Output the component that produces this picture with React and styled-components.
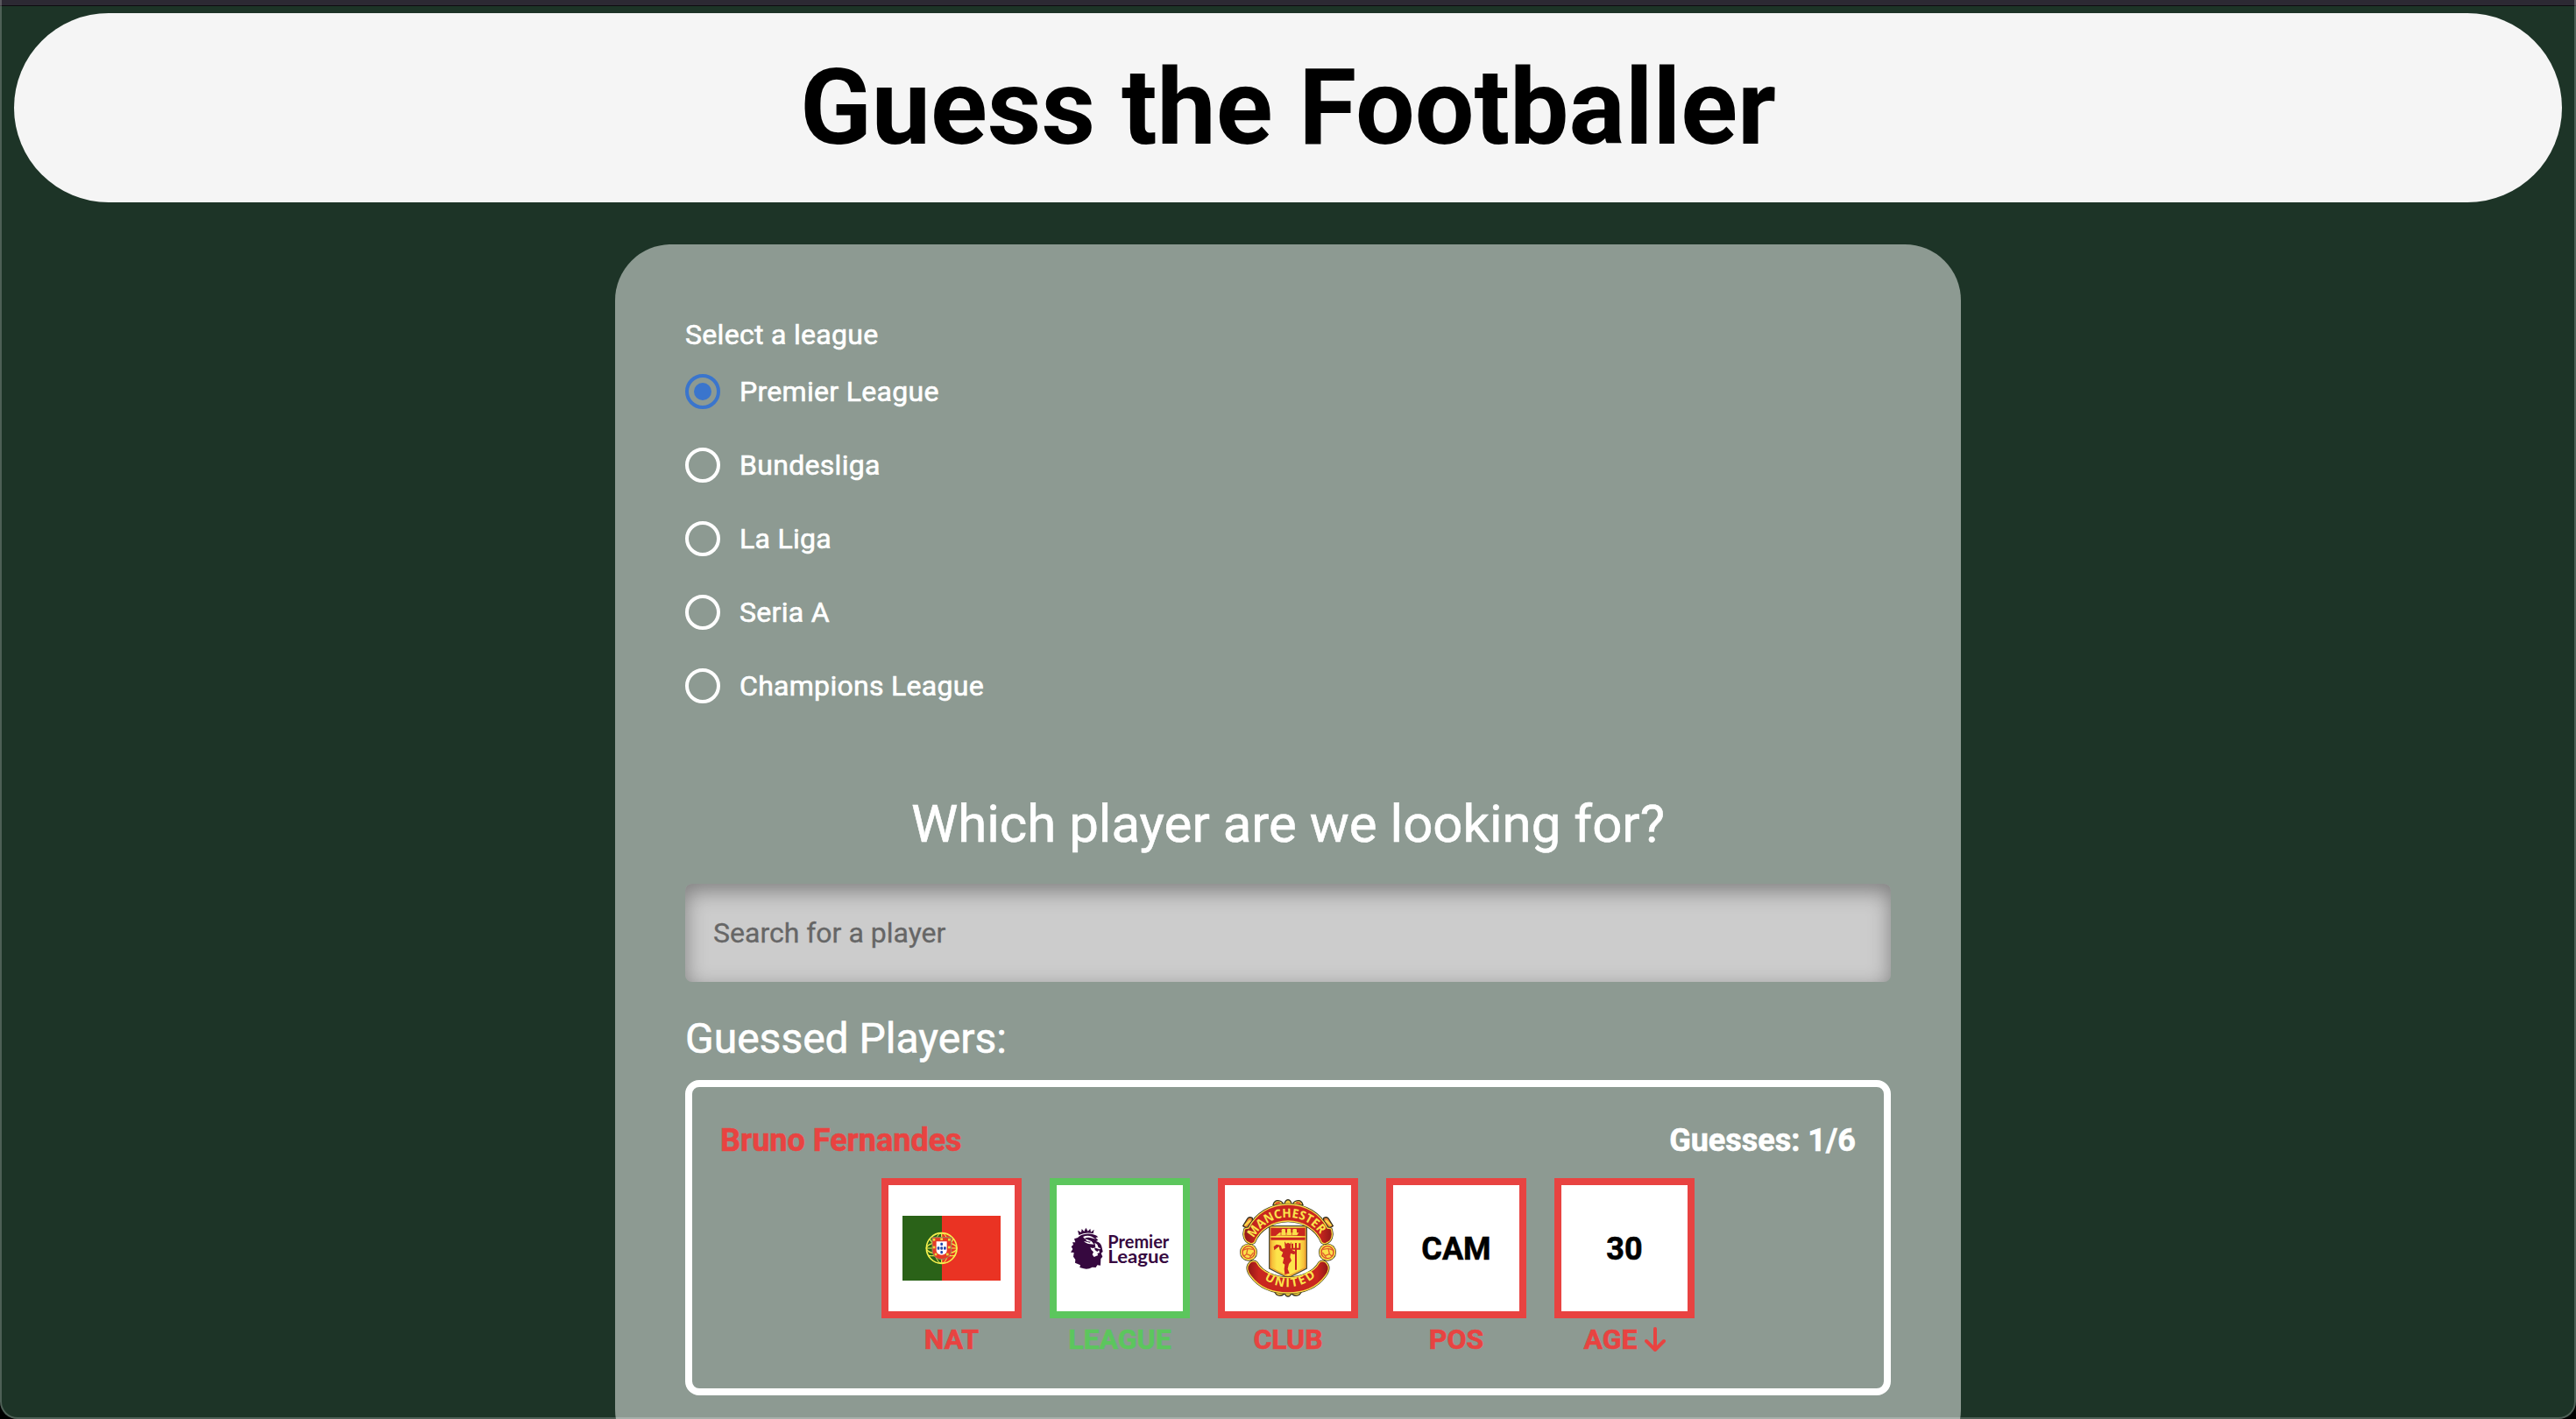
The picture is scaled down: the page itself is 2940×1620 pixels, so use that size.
import React, { useState } from "react";
import styled, { createGlobalStyle } from "styled-components";

const RED = "#e84341";
const GREEN = "#5cc65d";

const GlobalStyle = createGlobalStyle`
  *, *::before, *::after { box-sizing: border-box; }
  html, body { height: 100%; margin: 0; overflow: hidden; background: #1d3427; }
  body { font-family: Roboto, "Liberation Sans", sans-serif; color: #fff; }
`;

const Page = styled.div`
  height: 1620px;
  overflow: hidden;
  display: flex;
  flex-direction: column;
  align-items: center;
`;

const TopEdge = styled.div`
  align-self: stretch;
  flex: none;
  height: 7px;
  background: #2c2933;
  border-bottom: 1px solid #0d0c10;
`;

const WindowFrame = styled.div`
  position: fixed;
  inset: 0;
  border: 2px solid rgba(255, 255, 255, 0.22);
  border-top: 0;
  border-radius: 0 0 20px 20px;
  box-shadow: 0 0 0 20px #000;
  pointer-events: none;
`;

const Header = styled.header`
  flex: none;
  align-self: stretch;
  height: 216px;
  margin: 8px 16px 48px;
  border-radius: 108px;
  background: #f5f5f5;
  display: flex;
  align-items: center;
  justify-content: center;
`;

const Title = styled.h1`
  margin: 0;
  color: #000;
  font-size: 120px;
  font-weight: 700;
  line-height: 144px;
`;

const Card = styled.main`
  flex: none;
  width: 1536px;
  padding: 80px;
  border-radius: 64px;
  background: #8d9a92;
  -webkit-text-stroke: 0.6px currentColor;
`;

const Fieldset = styled.div`
  display: flex;
  flex-direction: column;
`;

const FieldLabel = styled.div`
  font-size: 32px;
  line-height: 46px;
  letter-spacing: 0.00938em;
`;

const Option = styled.label`
  display: flex;
  align-items: center;
  gap: 22px;
  height: 84px;
  font-size: 32px;
  line-height: 48px;
  letter-spacing: 0.00938em;
  cursor: pointer;
`;

const Radio = styled.input`
  appearance: none;
  flex: none;
  display: grid;
  place-content: center;
  width: 40px;
  height: 40px;
  margin: 0;
  border: 4px solid #fff;
  border-radius: 50%;

  &:checked { border-color: #3a75cd; }
  &:checked::before {
    content: "";
    width: 20px;
    height: 20px;
    border-radius: 50%;
    background: #3a75cd;
  }
`;

const Question = styled.h2`
  margin: 80px 0 32px;
  font-size: 60px;
  font-weight: 400;
  line-height: 72px;
  text-align: center;
`;

const Search = styled.input`
  display: block;
  width: 100%;
  height: 112px;
  padding: 0 32px;
  border: 0;
  border-radius: 8px;
  outline: 0;
  background: #ccc;
  box-shadow: inset 0 8px 24px rgba(0, 0, 0, 0.38);
  color: #222;
  font: 400 32px Roboto, "Liberation Sans", sans-serif;
  -webkit-text-stroke: 0.3px currentColor;

  &::placeholder { color: #666; opacity: 1; }
`;

const SectionTitle = styled.h3`
  margin: 33px 0 15px;
  font-size: 48px;
  font-weight: 400;
  line-height: 64px;
`;

const Guess = styled.section`
  padding: 32px;
  border: 8px solid #fff;
  border-radius: 16px;
`;

const GuessHead = styled.div`
  display: flex;
  justify-content: space-between;
  height: 72px;
  font-size: 36px;
  font-weight: 700;
  line-height: 59px;
`;

const PlayerName = styled.span`
  color: ${RED};
`;

const Tiles = styled.div`
  display: flex;
  justify-content: center;
  gap: 32px;
`;

const TileColumn = styled.div`
  width: 160px;
  display: flex;
  flex-direction: column;
  align-items: center;
  color: ${(p) => (p.$match ? GREEN : RED)};
`;

const TileBox = styled.div`
  width: 160px;
  height: 160px;
  border: 8px solid currentColor;
  background: #fff;
  display: flex;
  align-items: center;
  justify-content: center;
`;

const TileValue = styled.span`
  padding-top: 2px;
  color: #000;
  font-size: 36px;
  font-weight: 700;
`;

const TileLabel = styled.div`
  display: flex;
  align-items: center;
  gap: 8px;
  height: 48px;
  font-size: 32px;
  font-weight: 700;
  line-height: 48px;
`;

const Drawing = styled.svg`
  display: block;
  overflow: visible;
  -webkit-text-stroke: 0;
`;

const Flag = () => (
  <Drawing width="112" height="74" viewBox="150 204 336 222">
    <rect x="150" y="204" width="336" height="222" fill="#ea3323" />
    <rect x="150" y="204" width="135" height="222" fill="#2a6218" />
    <g fill="none" stroke="#f6f04d" strokeWidth="5">
      <circle cx="284" cy="315" r="52" />
      <ellipse cx="284" cy="315" rx="52" ry="21" strokeWidth="4" />
      <ellipse cx="284" cy="315" rx="24" ry="52" strokeWidth="3" />
      <path d="M284 262V368M233 315H336M243 283Q284 350 331 340M325 283Q284 350 238 340" strokeWidth="3.5" />
    </g>
    <path d="M252 278H317V321C317 341 302 353 284 353S252 341 252 321Z" fill="#e63a25" stroke="#9a8a60" strokeWidth="3" />
    <path d="M266 292H302V322C302 332 294 338 284 338S266 332 266 322Z" fill="#fff" />
    <g fill="#2547a8">
      {[[284, 301], [273, 315], [284, 315], [295, 315], [284, 329]].map(([x, y]) => (
        <rect key={`${x}-${y}`} x={x - 4} y={y - 5} width="8" height="10" rx="3" />
      ))}
    </g>
    <g fill="#e8d93f">
      {[[258, 286], [284, 284], [310, 286], [258, 312], [310, 312], [264, 336], [304, 336]].map(([x, y]) => (
        <rect key={`${x}-${y}`} x={x - 4} y={y - 4} width="8" height="8" />
      ))}
    </g>
  </Drawing>
);

const LeagueText = styled.text`
  font-family: Lato, Roboto, sans-serif;
  font-weight: 700;
  font-size: 64px;
  fill: #36083f;
`;

const LeagueLogo = () => (
  <Drawing width="112" height="48" viewBox="726 243 336 144">
    <g fill="#36083f">
      <path d="M754 270L750 254L762 261L764 249L772 258L778 245L785 257L793 248L795 260L806 251L803 265Q778 258 754 270Z" />
      <path d="M750 279Q761 267 779 266Q806 264 820 277L811 279L820 287L813 291Q829 296 832 309L836 327L830 332L835 344L829 351L828 374L817 373L812 381L800 380Q785 389 771 385L757 381L759 373L741 365L742 354L735 344L737 330L726 329L733 318L728 310L735 303L732 295L742 295L738 283Z" />
    </g>
    <g fill="#fff">
      <path d="M768 276Q783 269 798 275L812 284L796 280Q784 276 772 283L782 285L797 291L806 302L786 300Q776 297 771 291L785 294Z" />
      <path d="M808 296L817 302L821 313L829 316L822 320L825 330L817 334L820 339L806 345L800 337L804 328L797 321L793 313L803 315L811 311Z" />
    </g>
    <path d="M807 313L825 319L817 327L809 321ZM777 290L795 293L790 296Z" fill="#36083f" />
    <LeagueText x="853" y="315" textLength="210" lengthAdjust="spacingAndGlyphs">Premier</LeagueText>
    <LeagueText x="853" y="367" textLength="210" lengthAdjust="spacingAndGlyphs">League</LeagueText>
  </Drawing>
);

const CrestText = styled.text`
  font-family: "Open Sans", Lato, sans-serif;
  font-weight: 700;
  font-size: 42px;
  fill: #fbe54b;
`;

const Ball = ({ x, flip }) => (
  <g transform={`translate(${x} 329) scale(${flip ? -1 : 1} 1)`}>
    <circle r="30" fill="#3b3320" />
    <circle r="28" fill="#fbe04a" />
    <circle r="21" fill="#fbe04a" stroke="#d9452a" strokeWidth="4" />
    <path d="M-18 -8L-3 -13L15 -10M-3 -13L-7 6L-15 13M-7 6L8 12L17 1M8 12L4 20" fill="none" stroke="#e0622c" strokeWidth="4" />
  </g>
);

const TOP_RIBBON =
  "M151 252C150 248 158 248 165 246C191 196 239 165 300 165S409 196 435 246C442 248 450 248 449 252C455 271 449 291 432 297C427 300 420 299 415 295C398 250 349 222 300 222S202 250 185 295C180 299 173 300 168 297C151 291 145 271 151 252Z";
const BOTTOM_RIBBON =
  "M167 368C173 358 186 357 193 364C211 397 256 416 300 416S389 397 407 364C414 357 427 358 433 368C444 381 437 399 427 411C399 449 352 468 300 468S201 449 173 411C163 399 156 381 167 368Z";

const ClubCrest = () => (
  <Drawing width="112" height="112" viewBox="132 147 336 336">
    <defs>
      <path id="crest-top" d="M183 281A132 132 0 0 1 418 281" />
      <path id="crest-bottom" d="M198 407Q300 489 402 407" />
      <linearGradient id="crest-red" x1="0" x2="1">
        <stop offset="0" stopColor="#8f1717" />
        <stop offset="0.14" stopColor="#c9261f" />
        <stop offset="0.86" stopColor="#c9261f" />
        <stop offset="1" stopColor="#8f1717" />
      </linearGradient>
      <linearGradient id="crest-gold" x1="0" x2="1">
        <stop offset="0" stopColor="#f1a92f" />
        <stop offset="0.2" stopColor="#fde44b" />
        <stop offset="0.8" stopColor="#fde44b" />
        <stop offset="1" stopColor="#f1a92f" />
      </linearGradient>
    </defs>

    <g fill="#f4cf3e" stroke="#38311d" strokeWidth="4">
      <path d="M249 167Q253 151 266 152Q280 153 284 165L272 170Z" />
      <path d="M316 165Q320 153 334 152Q347 151 351 167L328 170Z" />
      <path d="M287 166Q290 150 300 149Q310 150 313 166Z" />
      <path d="M253 461Q259 480 275 477Q285 476 287 468ZM347 461Q341 480 325 477Q315 476 313 468ZM287 467Q292 480 300 480Q308 480 313 467Z" />
    </g>
    <g fill="#ef8a3a" stroke="#38311d" strokeWidth="4">
      <path d="M146 239L162 213Q169 206 178 212L178 222L161 244Q151 245 146 239Z" />
      <path d="M454 239L438 213Q431 206 422 212L422 222L439 244Q449 245 454 239Z" />
    </g>
    <path d="M152 237L171 220M448 237L429 220" stroke="#fbe04a" strokeWidth="6" />
    <path d="M257 162L272 159M343 162L328 159" stroke="#d9452a" strokeWidth="6" />

    <Ball x={165} />
    <Ball x={435} flip />

    <path d="M236 239H364V384L300 417L236 384Z" fill="url(#crest-gold)" stroke="#4b4a3c" strokeWidth="4" />
    <path d="M241 245H359V273H241ZM241 278H359V287H241Z" fill="#c9261f" />
    <path d="M241 287V382L300 412L359 382V287" fill="none" stroke="#eda02f" strokeWidth="4" />
    <g fill="#fbe04a">
      <path d="M258 272L271 262H337L331 271Z" />
      <rect x="278" y="249" width="13" height="20" rx="4" />
      <rect x="297" y="248" width="13" height="21" rx="4" />
      <rect x="316" y="249" width="14" height="20" rx="4" />
    </g>
    <path d="M276 271V263M294 270V250M313 270V250" stroke="#c9261f" strokeWidth="2" />
    <path
      d="M288 292L294 300L300 296L307 300L311 293L309 313L315 322L326 327L322 337L309 333L307 346L312 358L303 369L299 386L305 401L289 405L287 386L289 371L282 366L286 348L277 343L283 329L272 322L269 309L253 322L251 310L261 302L276 306L279 317L290 315Z"
      fill="#c9261f"
    />
    <path d="M315 299V317H340V298M327 297V389" fill="none" stroke="#c9261f" strokeWidth="6" />

    {[TOP_RIBBON, BOTTOM_RIBBON].map((d) => (
      <g key={d}>
        <path d={d} fill="none" stroke="#38311d" strokeWidth="8" />
        <path d={d} fill="url(#crest-red)" stroke="#f8dc48" strokeWidth="4" />
      </g>
    ))}
    <CrestText>
      <textPath href="#crest-top" textLength="274" lengthAdjust="spacingAndGlyphs">MANCHESTER</textPath>
    </CrestText>
    <CrestText>
      <textPath href="#crest-bottom" startOffset="25" textLength="191" lengthAdjust="spacing">UNITED</textPath>
    </CrestText>
  </Drawing>
);

const ArrowDown = () => (
  <svg width="24" height="28" viewBox="0 0 24 28" fill="none" stroke="currentColor" strokeWidth="4" strokeLinecap="round" strokeLinejoin="round">
    <path d="M12 2V25M2 16L12 26L22 16" />
  </svg>
);

const LEAGUES = ["Premier League", "Bundesliga", "La Liga", "Seria A", "Champions League"];

const ATTRIBUTES = [
  { label: "NAT", content: <Flag /> },
  { label: "LEAGUE", match: true, content: <LeagueLogo /> },
  { label: "CLUB", content: <ClubCrest /> },
  { label: "POS", content: <TileValue>CAM</TileValue> },
  { label: "AGE", content: <TileValue>30</TileValue>, hint: <ArrowDown /> },
];

export default function App() {
  const [league, setLeague] = useState(LEAGUES[0]);

  return (
    <Page>
      <GlobalStyle />
      <TopEdge />
      <Header>
        <Title>Guess the Footballer</Title>
      </Header>
      <Card>
        <Fieldset>
          <FieldLabel>Select a league</FieldLabel>
          {LEAGUES.map((name) => (
            <Option key={name}>
              <Radio type="radio" name="league" checked={league === name} onChange={() => setLeague(name)} />
              {name}
            </Option>
          ))}
        </Fieldset>
        <Question>Which player are we looking for?</Question>
        <Search placeholder="Search for a player" />
        <SectionTitle>Guessed Players:</SectionTitle>
        <Guess>
          <GuessHead>
            <PlayerName>Bruno Fernandes</PlayerName>
            <span>Guesses: 1/6</span>
          </GuessHead>
          <Tiles>
            {ATTRIBUTES.map(({ label, match, content, hint }) => (
              <TileColumn key={label} $match={match}>
                <TileBox>{content}</TileBox>
                <TileLabel>
                  {label}
                  {hint}
                </TileLabel>
              </TileColumn>
            ))}
          </Tiles>
        </Guess>
      </Card>
      <WindowFrame />
    </Page>
  );
}
